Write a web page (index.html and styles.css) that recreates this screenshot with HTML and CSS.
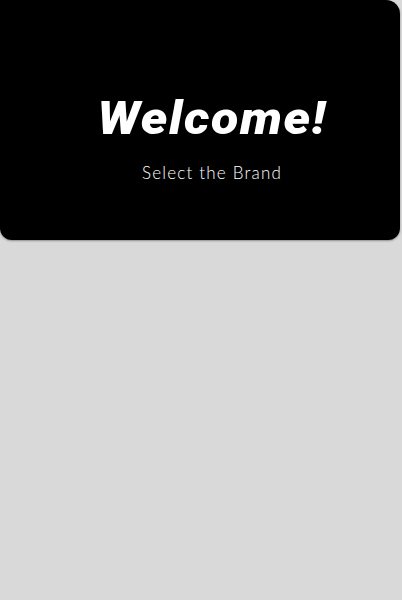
FILE: index.html
```html
<!DOCTYPE html>
<html>
<head>
<meta charset="utf-8">
<link rel="stylesheet" href="styles.css">
</head>
<body>
<div class="page">
  <header class="hero">
    <h1 class="title">Welcome!</h1>
    <p class="subtitle">Select the Brand</p>
  </header>
</div>
</body>
</html>
```
FILE: styles.css
```css
html, body {
  margin: 0;
  padding: 0;
  background: #d9d9d9;
  height: 100%;
}
.page {
  width: 400px;
  height: 600px;
}
.hero {
  box-sizing: border-box;
  height: 240px;
  background: #000;
  border-radius: 0 14px 12px 12px;
  box-shadow: 0 1px 2px rgba(0,0,0,0.35);
  display: flex;
  flex-direction: column;
  align-items: center;
  padding: 86px 0 0 24px;
}
.title {
  margin: 0;
  font-family: Roboto, "Liberation Sans", sans-serif;
  font-weight: 900;
  font-style: italic;
  font-size: 47px;
  line-height: 64px;
  color: #fff;
  letter-spacing: 1.5px;
  transform: scaleX(1.07);
}
.subtitle {
  margin: 11px 0 0;
  font-family: Lato, "Open Sans", sans-serif;
  font-weight: 300;
  font-size: 17px;
  line-height: 24px;
  letter-spacing: 1.2px;
  color: #ffffff;
}
```
